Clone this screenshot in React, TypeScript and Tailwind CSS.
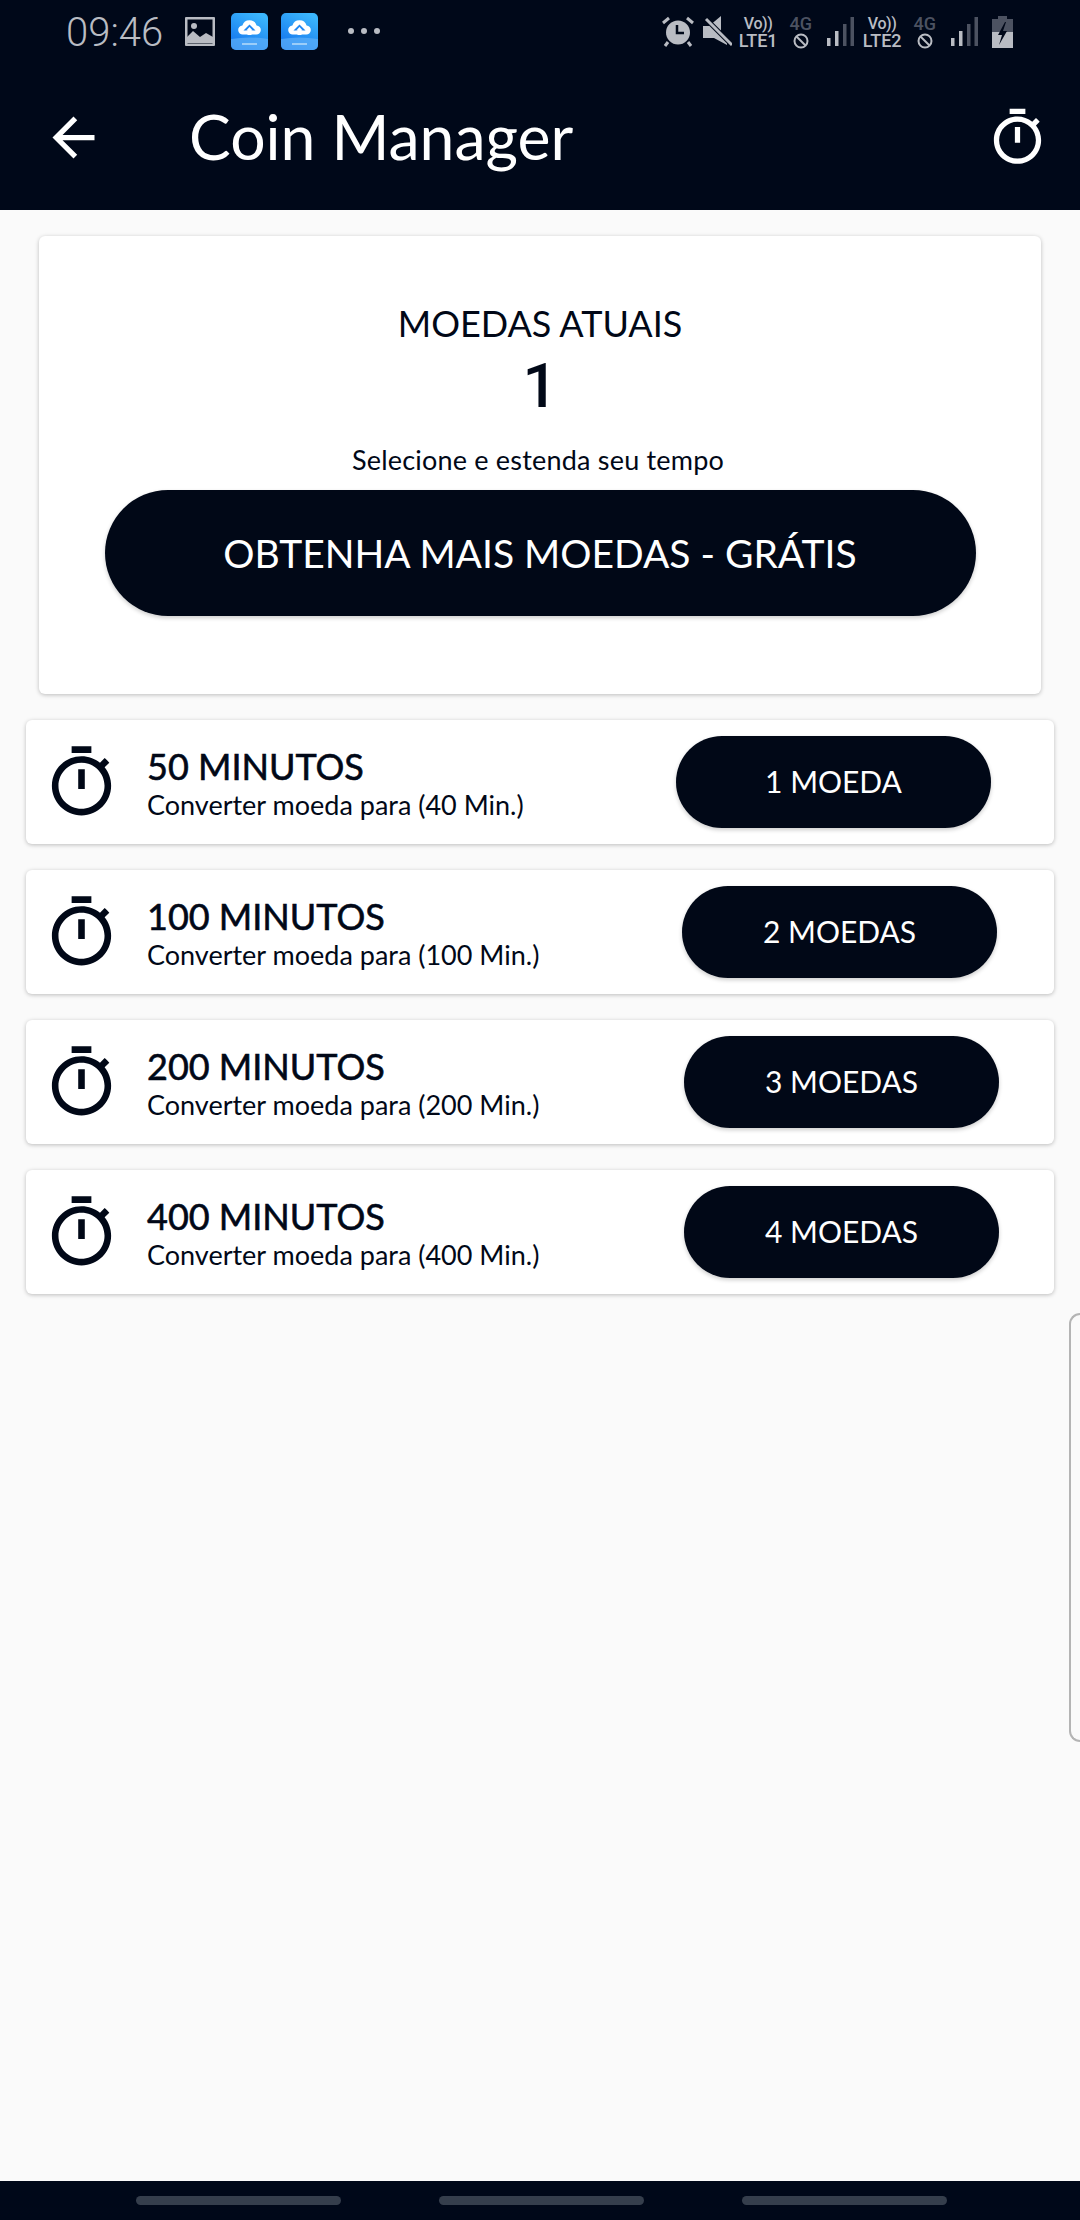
import React from 'react';

const TIMER_PATH =
  'M9 1h6v2H9zm10.03 6.39 1.42-1.42c-.43-.51-.9-.99-1.41-1.41l-1.42 1.42C16.07 4.74 14.12 4 12 4c-4.97 0-9 4.03-9 9s4.02 9 9 9 9-4.03 9-9c0-2.12-.74-4.07-1.97-5.61zM12 20c-3.87 0-7-3.13-7-7s3.13-7 7-7 7 3.13 7 7-3.13 7-7 7zM11 8h2v6h-2z';

const rows = [
  { title: '50 MINUTOS', sub: 'Converter moeda para (40 Min.)', label: '1 MOEDA', margin: 'mr-[63px]' },
  { title: '100 MINUTOS', sub: 'Converter moeda para (100 Min.)', label: '2 MOEDAS', margin: 'mr-[57px]' },
  { title: '200 MINUTOS', sub: 'Converter moeda para (200 Min.)', label: '3 MOEDAS', margin: 'mr-[55px]' },
  { title: '400 MINUTOS', sub: 'Converter moeda para (400 Min.)', label: '4 MOEDAS', margin: 'mr-[55px]' },
];

const TimerIcon = ({ className }: { className: string }) => (
  <svg viewBox="0 0 24 24" fill="currentColor" className={className}>
    <path d={TIMER_PATH} />
  </svg>
);

const CloudBadge = ({ className }: { className?: string }) => (
  <svg viewBox="0 0 37 37" className={`w-[37px] h-[37px] ${className ?? ''}`}>
    <defs>
      <linearGradient id="badge" x1="0.7" y1="0" x2="0.2" y2="1">
        <stop offset="0" stopColor="#3bb6fc" />
        <stop offset="1" stopColor="#1272ee" />
      </linearGradient>
    </defs>
    <rect width="37" height="37" rx="5" fill="url(#badge)" />
    <path d="M0 26q18 -3 37 0v6a5 5 0 0 1-5 5H5a5 5 0 0 1-5-5z" fill="#5fb0f8" opacity="0.7" />
    <rect x="11" y="30" width="15" height="2" fill="#bfe0fb" opacity="0.7" />
    {/* white cloud, blue arrow head cut in, white stem */}
    <path d="M12 21.500a4.500 4.500 0 0 1-.6-9 7.400 7.400 0 0 1 14.200 0 4.500 4.500 0 0 1-.6 9z" fill="#fff" />
    <path d="M18.500 11.500l-6 6h12z" fill="#1f86f2" />
    <path d="M18.500 14l-3.200 3.500h6.400z" fill="#fff" />
    <rect x="16.500" y="17" width="4" height="5" fill="#fff" />
  </svg>
);

const SignalBars = ({ className }: { className?: string }) => (
  <svg viewBox="0 0 27 29" className={`w-[27px] h-[29px] ${className ?? ''}`}>
    <rect x="0" y="21" width="3.500" height="8" fill="#b9bcc3" />
    <rect x="8" y="14" width="3.500" height="15" fill="#b9bcc3" />
    <rect x="16" y="7" width="3.500" height="22" fill="#4c5261" />
    <rect x="23.500" y="0" width="3.500" height="29" fill="#4c5261" />
  </svg>
);

const Volte = ({ label, className }: { label: string; className: string }) => (
  <div className={`flex flex-col items-center font-['Roboto',sans-serif] font-medium text-[#b9bcc3] ${className}`}>
    <span className="text-[16px] leading-[15px] h-[17px] tracking-tight">Vo))</span>
    <span className="text-[18px] leading-[16px]">{label}</span>
  </div>
);

const Blocked4G = ({ className }: { className: string }) => (
  <div className={`flex flex-col items-center font-['Roboto',sans-serif] font-medium ${className}`}>
    <span className="text-[18px] leading-[16px] h-[17px] text-[#4c5261]">4G</span>
    <svg viewBox="0 0 16 16" className="w-[16px] h-[16px]" fill="none" stroke="#b9bcc3" strokeWidth="2">
      <circle cx="8" cy="8" r="6.500" />
      <path d="M3.500 3.500l9 9" />
    </svg>
  </div>
);

const StatusBar = () => (
  <div className="h-[64px] flex items-start pt-[13px] text-[#b9bcc3]">
    <span className="ml-[66px] font-['Roboto',sans-serif] text-[40px] leading-[40px] font-light">09:46</span>
    <svg viewBox="0 0 30 29" className="ml-[22px] mt-[4px] w-[30px] h-[29px]">
      <rect width="30" height="29" rx="1" fill="#b9bcc3" />
      <rect x="2.500" y="2.500" width="25" height="24" fill="#000819" />
      <circle cx="9" cy="9" r="3" fill="#b9bcc3" />
      <path d="M2 26v-6l6-6 7 6 6-4 7 4v6z" fill="#b9bcc3" />
    </svg>
    <CloudBadge className="ml-[16px]" />
    <CloudBadge className="ml-[13px]" />
    <div className="ml-[30px] mt-[15px] flex gap-[7px]">
      <span className="w-[6px] h-[6px] rounded-full bg-[#b9bcc3]" />
      <span className="w-[6px] h-[6px] rounded-full bg-[#b9bcc3]" />
      <span className="w-[6px] h-[6px] rounded-full bg-[#b9bcc3]" />
    </div>
    <svg viewBox="0 0 32 31" className="ml-[282px] mt-[3px] w-[32px] h-[31px]">
      <circle cx="16" cy="16.500" r="12" fill="#b9bcc3" />
      <path d="M15 9v8h7" fill="none" stroke="#000819" strokeWidth="2.500" />
      <path d="M1 7l6-5M31 7l-6-5M6 26l-3 4M26 26l3 4" stroke="#b9bcc3" strokeWidth="3" />
    </svg>
    <svg viewBox="0 0 29 31" className="ml-[9px] mt-[3px] w-[29px] h-[31px]">
      <path d="M0 10h6l12-10v20l6 6v3L11 22H0z" fill="#b9bcc3" />
      <path d="M2 2l27 27" stroke="#000819" strokeWidth="5" />
      <path d="M3 3l26 26" stroke="#b9bcc3" strokeWidth="3" />
    </svg>
    <Volte label="LTE1" className="ml-[6px] mt-[3px] w-[40px]" />
    <Blocked4G className="ml-[11px] mt-[3px] w-[23px]" />
    <SignalBars className="ml-[15px] mt-[4px]" />
    <Volte label="LTE2" className="ml-[8px] mt-[3px] w-[40px]" />
    <Blocked4G className="ml-[11px] mt-[3px] w-[23px]" />
    <SignalBars className="ml-[15px] mt-[4px]" />
    <svg viewBox="0 0 21 32" className="ml-[14px] mt-[3px] w-[21px] h-[32px]">
      <path d="M6 0h9v3h6v29H0V3h6z" fill="#4c5261" />
      <path d="M0 16h21v16H0z" fill="#b9bcc3" />
      <path d="M13 6l-7 13h4l-3 10 8-14h-4l3-9z" fill="#000819" />
    </svg>
  </div>
);

const App = () => (
  <div className="relative w-[1080px] h-[2220px] flex flex-col bg-[#fafafa] overflow-hidden font-['Lato',sans-serif] text-[#010817]">
    {/* Header */}
    <div className="h-[210px] bg-[#000819] text-white shrink-0">
      <StatusBar />
      <div className="flex items-center h-[80px] mt-[33px]">
        <svg viewBox="0 0 24 24" fill="currentColor" className="ml-[42px] w-[63px] h-[63px]">
          <path d="M20 11H7.830l5.590-5.590L12 4l-8 8 8 8 1.410-1.410L7.830 13H20v-2z" />
        </svg>
        <span className="ml-[84px] pb-[2px] text-[62.5px] leading-[78px]">Coin Manager</span>
        <TimerIcon className="ml-auto mr-[31px] w-[63px] h-[63px]" />
      </div>
    </div>

    {/* Current coins card */}
    <div className="mt-[26px] mx-[39px] h-[458px] bg-white rounded-[6px] shadow-[0_1px_4px_rgba(0,0,0,0.25)] flex flex-col items-center pt-[65px]">
      <div className="text-[36px] leading-[44px]">MOEDAS ATUAIS</div>
      <div className="mt-[6px] text-[62px] leading-[70px] font-medium font-['Roboto',sans-serif]">1</div>
      <div className="mt-[21px] mr-[4px] text-[27px] leading-[36px] tracking-[0.2px]">Selecione e estenda seu tempo</div>
      <button className="mt-[12px] w-[871px] h-[126px] shrink-0 rounded-full bg-[#010817] text-white text-[39px] shadow-[0_2px_4px_rgba(0,0,0,0.2)]">
        OBTENHA MAIS MOEDAS - GRÁTIS
      </button>
    </div>

    {/* Conversion rows */}
    <div className="mt-[26px] mx-[26px] flex flex-col gap-[26px]">
      {rows.map(row => (
        <div key={row.title} className="h-[124px] bg-white rounded-[6px] shadow-[0_1px_4px_rgba(0,0,0,0.25)] flex items-center">
          <TimerIcon className="ml-[16px] w-[79px] h-[79px] shrink-0" />
          <div className="ml-[26px] pt-[3px]">
            <div className="text-[36px] leading-[41px] [-webkit-text-stroke:0.6px_#010817]">{row.title}</div>
            <div className="mt-[1px] text-[27px] leading-[34px]">{row.sub}</div>
          </div>
          <button className={`ml-auto ${row.margin} w-[315px] h-[92px] pb-[2px] rounded-full bg-[#010817] text-white text-[30px] shadow-[0_2px_4px_rgba(0,0,0,0.2)]`}>
            {row.label}
          </button>
        </div>
      ))}
    </div>

    {/* Edge panel handle */}
    <div className="absolute right-0 top-[1313px] w-[11px] h-[429px] border-l-2 border-y-2 border-[#b4b4b4] rounded-l-[14px]" />

    {/* Navigation bar */}
    <div className="mt-auto h-[39px] bg-[#000819] flex items-center pl-[136px] gap-[98px] shrink-0">
      <span className="w-[205px] h-[9px] rounded-full bg-[#353e4c]" />
      <span className="w-[205px] h-[9px] rounded-full bg-[#353e4c]" />
      <span className="w-[205px] h-[9px] rounded-full bg-[#353e4c]" />
    </div>
  </div>
);

export default App;
